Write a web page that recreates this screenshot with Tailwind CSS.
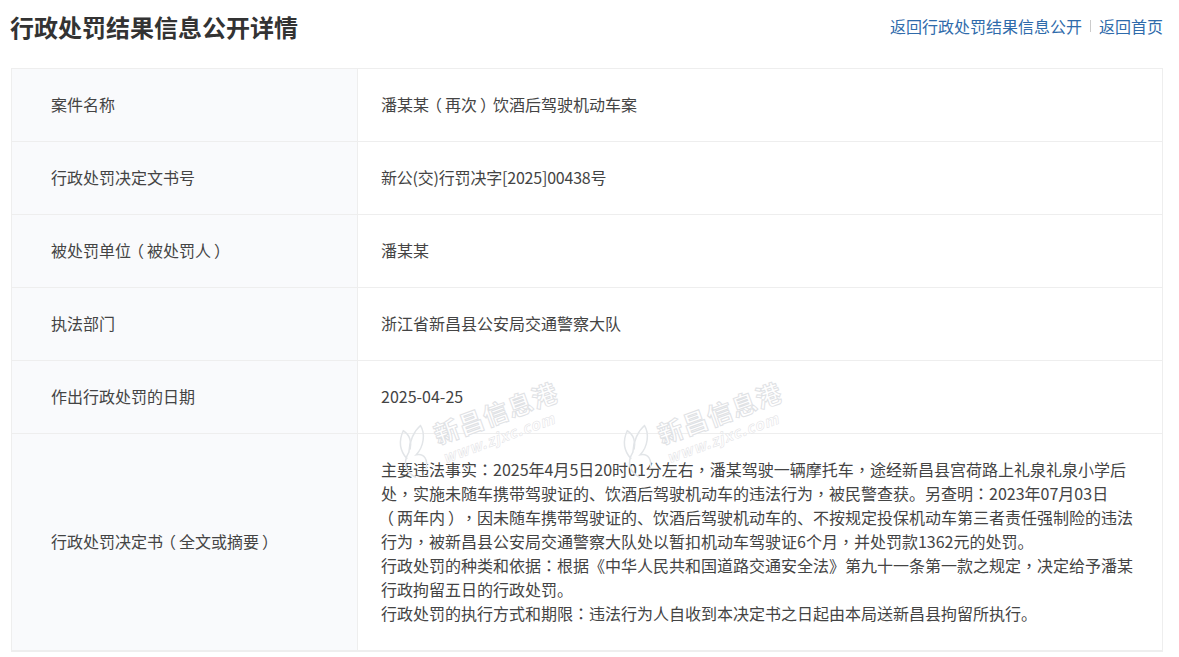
<!DOCTYPE html>
<html lang="zh-CN">
<head>
    <meta charset="UTF-8">
    <meta name="viewport" content="width=device-width, initial-scale=1.0">
    <title>行政处罚结果信息公开详情</title>
    <script src="https://cdn.jsdelivr.net/npm/@tailwindcss/browser@4"></script>
</head>
<body class="bg-white text-[#444] text-[16px] leading-6 font-['Noto_Sans_CJK_SC',sans-serif] [text-spacing-trim:space-all] overflow-hidden h-[657px]">
    <div class="relative w-[1152px] ml-[11px]">
        <!-- Header -->
        <div class="flex justify-between items-center h-[68px] pb-[14px]">
            <h1 class="text-[24px] font-bold text-[#333] -ml-px">行政处罚结果信息公开详情</h1>
            <div class="flex items-center text-[#2f6bab] mb-[2px]">
                <a href="#">返回行政处罚结果信息公开</a>
                <span class="w-px h-3 bg-[#ccc] mx-2"></span>
                <a href="#">返回首页</a>
            </div>
        </div>

        <!-- Details table -->
        <div class="grid grid-cols-[346px_1fr] border border-[#eee] border-b-2">
            <div class="h-[73px] flex items-center pl-[39px] pb-[2px] bg-[#f9fafc] border-r border-b border-[#eee]">案件名称</div>
            <div class="h-[73px] flex items-center pl-[23px] pb-[2px] border-b border-[#eee]"><span>潘某某<span class="inline-block -translate-x-[3px]">（</span>再次<span class="inline-block translate-x-[3px]">）</span>饮酒后驾驶机动车案</span></div>

            <div class="h-[73px] flex items-center pl-[39px] pb-[2px] bg-[#f9fafc] border-r border-b border-[#eee]">行政处罚决定文书号</div>
            <div class="h-[73px] flex items-center pl-[23px] pb-[2px] border-b border-[#eee] tracking-[-0.2px]">新公(交)行罚决字[2025]00438号</div>

            <div class="h-[73px] flex items-center pl-[39px] pb-[2px] bg-[#f9fafc] border-r border-b border-[#eee]"><span>被处罚单位<span class="inline-block -translate-x-[3px]">（</span>被处罚人<span class="inline-block translate-x-[3px]">）</span></span></div>
            <div class="h-[73px] flex items-center pl-[23px] pb-[2px] border-b border-[#eee]">潘某某</div>

            <div class="h-[73px] flex items-center pl-[39px] pb-[2px] bg-[#f9fafc] border-r border-b border-[#eee]">执法部门</div>
            <div class="h-[73px] flex items-center pl-[23px] pb-[2px] border-b border-[#eee]">浙江省新昌县公安局交通警察大队</div>

            <div class="h-[73px] flex items-center pl-[39px] pb-[2px] bg-[#f9fafc] border-r border-b border-[#eee]">作出行政处罚的日期</div>
            <div class="h-[73px] flex items-center pl-[23px] pb-[2px] border-b border-[#eee]">2025-04-25</div>

            <div class="h-[216px] flex items-center pl-[39px] pb-[2px] bg-[#f9fafc] border-r border-[#eee]"><span>行政处罚决定书<span class="inline-block -translate-x-[3px]">（</span>全文或摘要<span class="inline-block translate-x-[3px]">）</span></span></div>
            <div class="h-[216px] flex items-center pl-[23px] pr-6 pb-[2px]">
                <p>主要违法事实<span lang="zh-TW" class="font-['Noto_Sans_CJK_TC']">：</span>2025年4月5日20时01分左右<span lang="zh-TW" class="font-['Noto_Sans_CJK_TC']">，</span>潘某驾驶一辆摩托车<span lang="zh-TW" class="font-['Noto_Sans_CJK_TC']">，</span>途经新昌县宫荷路上礼泉礼泉小学后处<span lang="zh-TW" class="font-['Noto_Sans_CJK_TC']">，</span>实施未随车携带驾驶证的、饮酒后驾驶机动车的违法行为<span lang="zh-TW" class="font-['Noto_Sans_CJK_TC']">，</span>被民警查获。另查明<span lang="zh-TW" class="font-['Noto_Sans_CJK_TC']">：</span>2023年07月03日<br><span class="inline-block -translate-x-[3px]">（</span>两年内<span class="inline-block translate-x-[3px]">）</span><span lang="zh-TW" class="font-['Noto_Sans_CJK_TC']">，</span>因未随车携带驾驶证的、饮酒后驾驶机动车的、不按规定投保机动车第三者责任强制险的违法行为<span lang="zh-TW" class="font-['Noto_Sans_CJK_TC']">，</span>被新昌县公安局交通警察大队处以暂扣机动车驾驶证6个月<span lang="zh-TW" class="font-['Noto_Sans_CJK_TC']">，</span>并处罚款1362元的处罚。<br>行政处罚的种类和依据<span lang="zh-TW" class="font-['Noto_Sans_CJK_TC']">：</span>根据《中华人民共和国道路交通安全法》第九十一条第一款之规定<span lang="zh-TW" class="font-['Noto_Sans_CJK_TC']">，</span>决定给予潘某行政拘留五日的行政处罚。<br>行政处罚的执行方式和期限<span lang="zh-TW" class="font-['Noto_Sans_CJK_TC']">：</span>违法行为人自收到本决定书之日起由本局送新昌县拘留所执行。</p>
            </div>
        </div>

        <!-- Watermarks -->
        <div class="absolute left-[380px] top-[402px] w-[180px] -rotate-[20deg] text-white [-webkit-text-stroke:1px_#dfe2e5] pointer-events-none flex items-center gap-1">
            <svg class="w-10 h-[52px] shrink-0" viewBox="0 0 40 52" fill="none" stroke="#e2e5e8" stroke-width="1.5"><path d="M12 50C4 42 4 32 14 24 18 14 26 6 34 3 36 12 30 24 20 29 28 30 30 38 24 46"/><path d="M10 30C6 20 8 10 16 2 21 8 20 16 16 22"/></svg>
            <div class="flex flex-col gap-1 shrink-0">
                <span class="text-[25px] leading-[26px] font-bold tracking-[1px] whitespace-nowrap">新昌信息港</span>
                <span class="text-[15px] leading-4 font-bold italic tracking-[1px] [-webkit-text-stroke:0.5px_#dfe2e5]">www.zjxc.com</span>
            </div>
        </div>
        <div class="absolute left-[604px] top-[402px] w-[180px] -rotate-[20deg] text-white [-webkit-text-stroke:1px_#dfe2e5] pointer-events-none flex items-center gap-1">
            <svg class="w-10 h-[52px] shrink-0" viewBox="0 0 40 52" fill="none" stroke="#e2e5e8" stroke-width="1.5"><path d="M12 50C4 42 4 32 14 24 18 14 26 6 34 3 36 12 30 24 20 29 28 30 30 38 24 46"/><path d="M10 30C6 20 8 10 16 2 21 8 20 16 16 22"/></svg>
            <div class="flex flex-col gap-1 shrink-0">
                <span class="text-[25px] leading-[26px] font-bold tracking-[1px] whitespace-nowrap">新昌信息港</span>
                <span class="text-[15px] leading-4 font-bold italic tracking-[1px] [-webkit-text-stroke:0.5px_#dfe2e5]">www.zjxc.com</span>
            </div>
        </div>
    </div>
</body>
</html>
